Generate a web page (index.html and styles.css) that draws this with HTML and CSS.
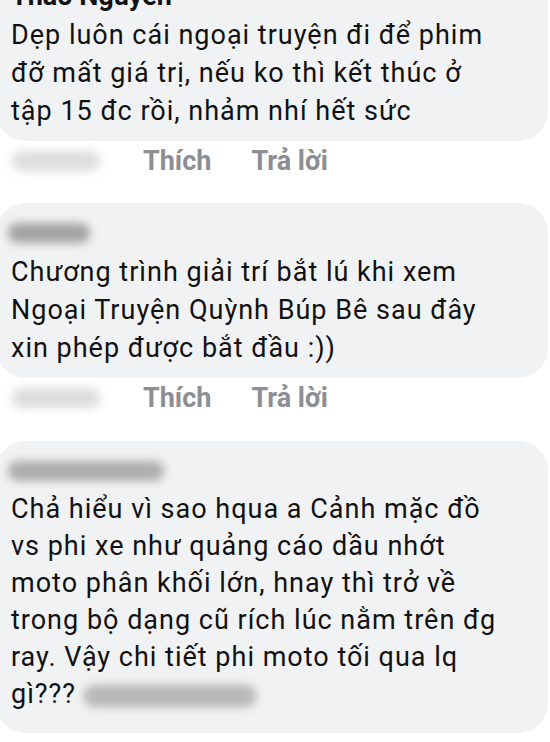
FILE: index.html
```html
<!DOCTYPE html>
<html lang="vi">
<head>
<meta charset="utf-8">
<link rel="stylesheet" href="styles.css">
</head>
<body>
<div class="thread">
  <div class="comment">
    <div class="bubble">
      <div class="name">Thảo Nguyễn</div>
      <div class="text">Dẹp luôn cái ngoại truyện đi để phim<br>đỡ mất giá trị, nếu ko thì kết thúc ở<br>tập 15 đc rồi, nhảm nhí hết sức</div>
    </div>
    <div class="actions">
      <span class="time blur"></span>
      <span class="act">Thích</span>
      <span class="act">Trả lời</span>
    </div>
  </div>
  <div class="comment">
    <div class="bubble">
      <div class="name"><span class="blur name-blur short"></span></div>
      <div class="text">Chương trình giải trí bắt lú khi xem<br>Ngoại Truyện Quỳnh Búp Bê sau đây<br>xin phép được bắt đầu :))</div>
    </div>
    <div class="actions">
      <span class="time blur"></span>
      <span class="act">Thích</span>
      <span class="act">Trả lời</span>
    </div>
  </div>
  <div class="comment third">
    <div class="bubble last">
      <div class="name"><span class="blur name-blur long"></span></div>
      <div class="text tight">Chả hiểu vì sao hqua a Cảnh mặc đồ<br>vs phi xe như quảng cáo dầu nhớt<br>moto phân khối lớn, hnay thì trở về<br>trong bộ dạng cũ rích lúc nằm trên đg<br>ray. Vậy chi tiết phi moto tối qua lq<br>gì??? <span class="blur tail"></span></div>
    </div>
  </div>
</div>
</body>
</html>
```

FILE: styles.css
```css
html, body {
  margin: 0;
  padding: 0;
  background: #ffffff;
}
body {
  width: 550px;
  height: 742px;
  overflow: hidden;
  font-family: Roboto, "Liberation Sans", sans-serif;
  color: #111111;
}
.thread {
  margin-top: -34px;
  display: flex;
  flex-direction: column;
}
.comment {
  display: flex;
  flex-direction: column;
}
.comment + .comment {
  margin-top: 22px;
}
.comment.third {
  margin-top: 23px;
}
.bubble {
  background: #f1f2f4;
  border-radius: 30px;
  margin-left: -4px;
  margin-right: 2px;
  padding: 10px 12px 11px 15px;
}
.bubble.last {
  padding-bottom: 20px;
}
.name {
  height: 40px;
  line-height: 40px;
  font-size: 27px;
  font-weight: 700;
  display: flex;
  align-items: center;
}
.text {
  font-size: 27px;
  line-height: 38px;
  letter-spacing: 1px;
}
.text.tight {
  line-height: 37px;
}
.blur {
  display: inline-block;
  background: #8f8f8f;
  filter: blur(5px);
  border-radius: 9px;
}
.name-blur {
  height: 20px;
  margin-left: -3px;
}
.name-blur.short { width: 82px; opacity: 0.8; }
.name-blur.long { width: 156px; opacity: 0.7; }
.tail {
  width: 172px;
  height: 22px;
  vertical-align: middle;
  opacity: 0.6;
}
.actions {
  display: flex;
  align-items: center;
  height: 40px;
  padding-left: 12px;
}
.time {
  width: 88px;
  height: 20px;
  opacity: 0.3;
  margin-right: 43px;
}
.act {
  font-size: 27px;
  font-weight: 700;
  color: #8b8e93;
  margin-right: 40px;
}
```
